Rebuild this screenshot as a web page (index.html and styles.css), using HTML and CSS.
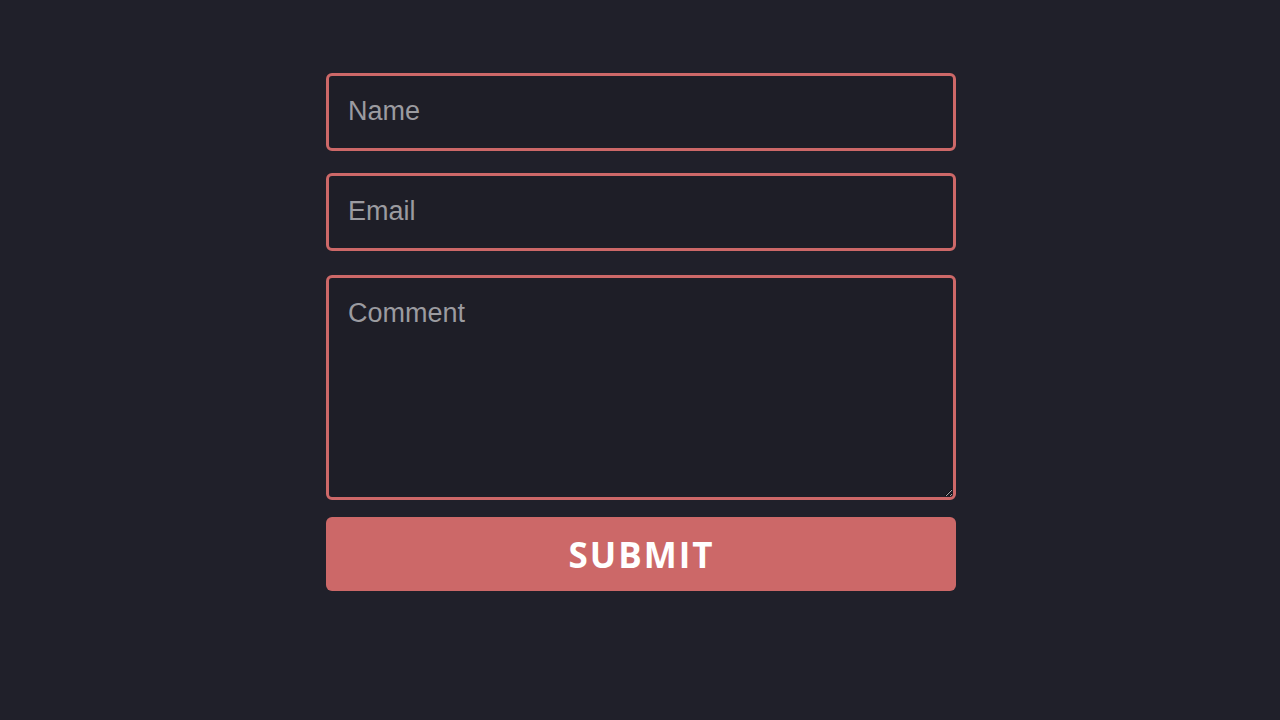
FILE: index.html
```html
<!DOCTYPE html>
<html lang="en">

<head>
    <meta charset="UTF-8" />
    <meta name="viewport" content="width=device-width, initial-scale=1.0" />
    <title>Contact</title>
    <link rel="stylesheet" href="styles.css">
</head>

<body>
    <form class="contact-form">
        <input type="text" class="field field-name" placeholder="Name" />
        <input type="email" class="field field-email" placeholder="Email" />
        <textarea class="field field-comment" placeholder="Comment"></textarea>
        <button type="submit" class="submit-btn">SUBMIT</button>
    </form>
</body>

</html>
```

FILE: styles.css
```css
body {
    margin: 0;
    padding-left: 2px;
    background: #20202a;
    font-family: "Liberation Sans", Arial, sans-serif;
}

.contact-form {
    width: 630px;
    margin: 0 auto;
    padding-top: 73px;
    display: flex;
    flex-direction: column;
}

.field {
    box-sizing: border-box;
    width: 100%;
    background: #1e1e27;
    border: 3px solid #cd6868;
    border-radius: 6px;
    color: #ddd;
    font-family: "Liberation Sans", Arial, sans-serif;
    font-size: 27px;
    padding: 0 19px;
    outline: none;
}

.field::placeholder {
    color: #9b9ba0;
}

.field-name,
.field-email {
    height: 78px;
    padding-bottom: 1px;
}

.field-name {
    margin-bottom: 22px;
}

.field-email {
    margin-bottom: 24px;
}

.field-comment {
    height: 225px;
    padding-top: 20px;
    resize: vertical;
    margin-bottom: 17px;
}

.submit-btn {
    height: 74px;
    width: 100%;
    background: #cc6868;
    color: #fff;
    border: none;
    border-radius: 6px;
    font-family: "Open Sans", sans-serif;
    font-weight: 700;
    font-size: 35px;
    letter-spacing: 2px;
    text-indent: 1px;
    cursor: pointer;
}
```
